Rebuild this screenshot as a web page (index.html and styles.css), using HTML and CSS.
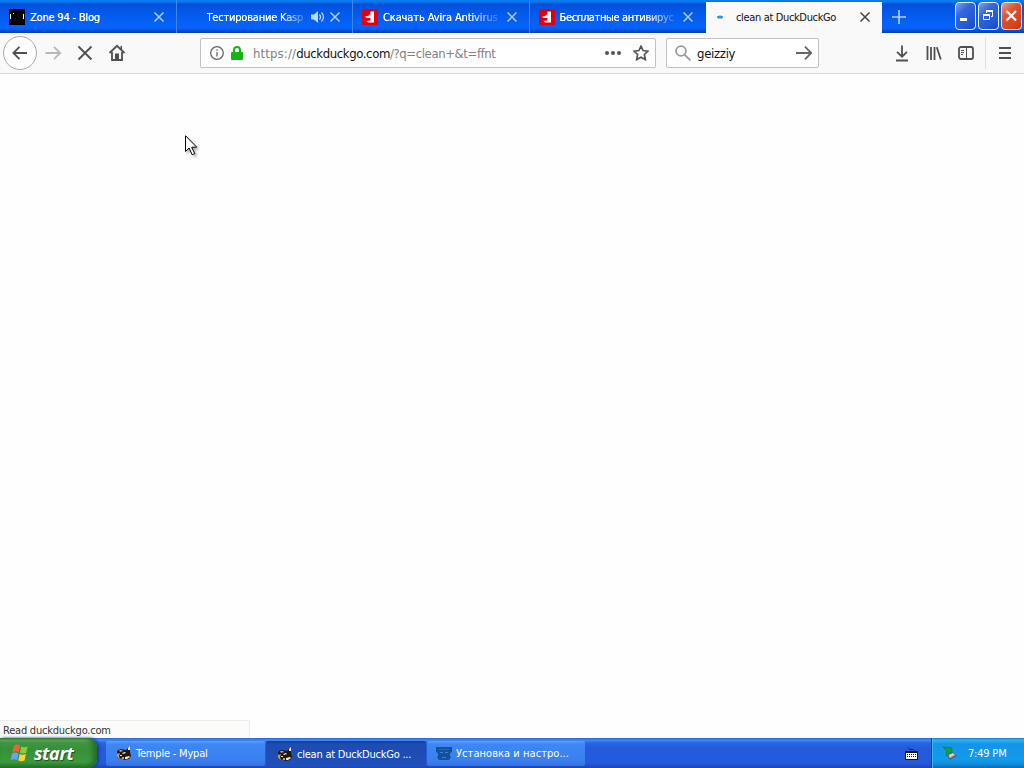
FILE: index.html
```html
<!DOCTYPE html>
<html lang="en">
<head>
  <meta charset="UTF-8">
  <meta name="viewport" content="width=device-width, initial-scale=1.0">
  <title>clean at DuckDuckGo</title>
  <link rel="stylesheet" href="styles.css">
</head>
<body>
  <div class="screen">

    <!-- Tabs -->
    <header class="titlebar">
      <div class="tab">
        <svg class="favicon" width="16" height="16" viewBox="0 0 16 16"><path fill="#000" d="M0 0h16v16H0z"/><path fill="#fff" d="M1 5h1v5H1zM4 4h1v1H4zM14 5h1v5h-1z"/></svg>
        <span class="tab-title zone">Zone 94 - Blog</span>
        <svg class="close" width="12" height="12" viewBox="0 0 12 12"><path d="M1.500 1.500l9 9m0-9l-9 9"/></svg>
      </div>
      <div class="tab">
        <span class="favicon blank"></span>
        <span class="tab-title fade test">Тестирование Kasp</span>
        <svg class="sound" width="14" height="14" viewBox="0 0 14 14"><path fill="#b9dcff" d="M0 4.500h3L7 1v12L3 9.500H0z"/><path fill="none" stroke="#b9dcff" stroke-width="1.300" d="M8.500 4.500q2 2.500 0 5M10.500 2.500q4 4.500 0 9"/></svg>
        <svg class="close" width="12" height="12" viewBox="0 0 12 12"><path d="M1.500 1.500l9 9m0-9l-9 9"/></svg>
      </div>
      <div class="tab">
        <svg class="favicon" width="16" height="16" viewBox="0 0 16 16"><rect width="16" height="16" rx="1" fill="#e20010"/><path fill="#fff" d="M8.500 2.500H12v11H6L4.500 12l4-.5V9H4.500L3 7.500l3-.5 2.500-2z"/></svg>
        <span class="tab-title fade avira">Скачать Avira Antivirus</span>
        <svg class="close" width="12" height="12" viewBox="0 0 12 12"><path d="M1.500 1.500l9 9m0-9l-9 9"/></svg>
      </div>
      <div class="tab">
        <svg class="favicon" width="16" height="16" viewBox="0 0 16 16"><rect width="16" height="16" rx="1" fill="#e20010"/><path fill="#fff" d="M8.500 2.500H12v11H6L4.500 12l4-.5V9H4.500L3 7.500l3-.5 2.500-2z"/></svg>
        <span class="tab-title fade free">Бесплатные антивирус</span>
        <svg class="close" width="12" height="12" viewBox="0 0 12 12"><path d="M1.500 1.500l9 9m0-9l-9 9"/></svg>
      </div>
      <div class="tab active">
        <svg class="favicon" width="16" height="16" viewBox="0 0 16 16"><ellipse cx="5" cy="8" rx="3" ry="1.500" fill="#2e8fe0"/></svg>
        <span class="tab-title duck">clean at DuckDuckGo</span>
        <svg class="close" width="12" height="12" viewBox="0 0 12 12"><path d="M1.500 1.500l9 9m0-9l-9 9"/></svg>
      </div>
      <svg class="new-tab" width="14" height="14" viewBox="0 0 14 14"><path d="M7 0v14M0 7h14"/></svg>
      <div class="window-buttons">
        <span class="win-btn"><svg width="20" height="26" viewBox="0 0 20 26"><path fill="#fff" d="M4 15h7v3H4z"/></svg></span>
        <span class="win-btn"><svg width="20" height="26" viewBox="0 0 20 26"><path fill="none" stroke="#fff" d="M7.500 10V7.500h6v6H12M4.500 11.500h6v5h-6z"/><path fill="#fff" d="M7 7h7v2H7zM4 11h7v2H4z"/></svg></span>
        <span class="win-btn red"><svg width="20" height="26" viewBox="0 0 20 26"><path fill="none" stroke="#fff" stroke-width="2.200" d="M4.500 8l9.500 9.500M14 8l-9.500 9.500"/></svg></span>
      </div>
    </header>

    <!-- Navigation bar -->
    <nav class="navbar">
      <div class="nav-buttons">
        <span class="back"><svg width="18" height="18" viewBox="0 0 18 18"><path d="M16 9H2.500M8.500 2.800L2.300 9l6.200 6.200"/></svg></span>
        <svg class="forward" width="18" height="18" viewBox="0 0 18 18"><path d="M1.500 9H16M10 2.800L16.200 9 10 15.200"/></svg>
        <svg width="18" height="18" viewBox="0 0 18 18"><path d="M2.500 2.500l13 13m0-13l-13 13"/></svg>
        <svg width="18" height="18" viewBox="0 0 18 18"><path d="M1.500 9L9 1.800 16.500 9M4 8v8h10V8"/><path class="solid" d="M7 9.500h4V16H7zM12.500 2H14v4h-1.500z"/></svg>
      </div>

      <div class="urlbar">
        <svg class="info" width="14" height="14" viewBox="0 0 14 14"><circle cx="7" cy="7" r="6.300"/><path d="M7 6v4.500M7 3.200v1.600"/></svg>
        <svg class="lock" width="12" height="14" viewBox="0 0 12 14"><path fill="none" stroke="#12b512" stroke-width="2" d="M3 7V4a3 3 0 0 1 6 0v3"/><rect y="6" width="12" height="8" rx="1" fill="#12b512"/></svg>
        <span class="url"><span class="scheme">https://</span><b>duckduckgo.com</b>/?q=clean+&amp;t=ffnt</span>
        <svg class="dots" width="16" height="6" viewBox="0 0 16 6"><circle cx="2" cy="3" r="2"/><circle cx="8" cy="3" r="2"/><circle cx="14" cy="3" r="2"/></svg>
        <svg class="star" width="16" height="16" viewBox="0 0 16 16"><path d="M8 1.200l2.100 4.300 4.800.7-3.500 3.300.9 5.100L8 12.200l-4.300 2.400.9-5.100L1.100 6.200l4.800-.7z"/></svg>
      </div>

      <div class="searchbar">
        <svg class="magnifier" width="16" height="16" viewBox="0 0 16 16"><circle cx="6" cy="6" r="4.900"/><path d="M9.600 9.600l5.900 5.900"/></svg>
        <span class="query">geizziy</span>
        <svg class="go" width="16" height="16" viewBox="0 0 16 16"><path d="M0 8h15M9 1.700L15.200 8 9 14.300"/></svg>
      </div>

      <div class="tools">
        <svg width="16" height="18" viewBox="0 0 16 18"><path d="M8 1.500v11M3 7.800l5 4.900 5-4.900M2 16.500h12"/></svg>
        <svg width="16" height="18" viewBox="0 0 16 18"><path d="M1.500 2v14M5 3v13M8.500 3v13M10.800 3.200l4 12.300"/></svg>
        <svg width="16" height="18" viewBox="0 0 16 18"><rect x="1" y="3" width="14" height="12" rx="2"/><path class="thin" d="M8.500 3v12M3 6.500h3M3 8.500h3M3 10.500h2"/></svg>
      </div>
      <svg class="menu" width="14" height="18" viewBox="0 0 14 18"><path d="M1 4h12M1 9h12M1 14h12"/></svg>
    </nav>

    <main class="page">
      <div class="status"><span>Read duckduckgo.com</span></div>
    </main>

    <!-- Taskbar -->
    <footer class="taskbar">
      <div class="start">
        <svg width="20" height="20" viewBox="0 0 20 20"><path fill="#ef6235" d="M4 2.500q3.500-2 6 0L8.800 9q-3-1.500-6.500.2z"/><path fill="#8ccc3c" d="M11.200 3.500q3 1.500 6.500-.2L16.200 9.700q-3 1.500-6.200 0z"/><path fill="#6ea0f5" d="M2 10.500q3.300-1.800 6.500 0L7.200 17q-3-1.700-6.500 0z"/><path fill="#fbd238" d="M9.700 11q3 1.500 6.300 0L14.500 17.500q-3 1.500-6.200 0z"/></svg>
        <span>start</span>
      </div>
      <div class="tasks">
        <div class="task">
          <svg width="16" height="16" viewBox="0 0 16 16"><path fill="#1d1713" d="M2 4l3-1 5 1 3-3 1 0 0 5 1 4-2 3-5 1-2-2-3 1-2-2 1-3-1-2z"/><path fill="#c99a58" d="M3 4l3 0 1 1-3 1zM1 8l3-1-1 3 1 3-2-1-1-2zM6 11l2 0 0 2-2 0z"/><path fill="#f6ead2" d="M12 2l2-2v4l-2 0zM6 7l3-1 1 1-3 1zM9 11l4-1 1 1-3 2H9zM4 9h2v1H4z"/></svg>
          <span class="task-a">Temple - Mypal</span>
        </div>
        <div class="task pressed">
          <svg width="16" height="16" viewBox="0 0 16 16"><path fill="#1d1713" d="M2 4l3-1 5 1 3-3 1 0 0 5 1 4-2 3-5 1-2-2-3 1-2-2 1-3-1-2z"/><path fill="#c99a58" d="M3 4l3 0 1 1-3 1zM1 8l3-1-1 3 1 3-2-1-1-2zM6 11l2 0 0 2-2 0z"/><path fill="#f6ead2" d="M12 2l2-2v4l-2 0zM6 7l3-1 1 1-3 1zM9 11l4-1 1 1-3 2H9zM4 9h2v1H4z"/></svg>
          <span class="task-b">clean at DuckDuckGo ...</span>
        </div>
        <div class="task">
          <svg width="16" height="16" viewBox="0 0 16 16"><path fill="#15509c" d="M0 1h16v5l-2 1v3l1 1-2 3H3l-2-3 1-1V7L0 6z"/><path fill="#2668b8" d="M3 3h10v1H3z"/><path fill="#2f83dc" d="M4 6h3v1H4zM9 6h3v1H9zM6 11h4v1H6z"/></svg>
          <span class="task-c">Установка и настро...</span>
        </div>
      </div>
      <svg class="keyboard" width="14" height="14" viewBox="0 0 14 14"><path fill="none" stroke="#0a1c50" d="M3 .5l2 2h3l2 2"/><rect y="4" width="13" height="9" fill="#111"/><path fill="#fff" d="M1 6h11v6H1z"/><path stroke="#111" stroke-dasharray="1 1" d="M2 7.500h10M2 9.500h10"/></svg>
      <div class="tray">
        <svg width="14" height="14" viewBox="0 0 14 14"><path fill="#566875" d="M3 9l7-3 4 4-7 4z"/><path fill="#c3cfd2" d="M5 9l5-2 2 2-5 3z"/><path fill="#16a52c" stroke="#0b6d33" stroke-width=".5" d="M0 1l9 1v5L7 6l-2 4-2-1 1-4z"/></svg>
        <span class="clock">7:49 PM</span>
      </div>
    </footer>

    <svg class="cursor" width="16" height="24" viewBox="0 0 16 24"><path fill="#fff" stroke="#000" d="M.5.7v15.800l3.600-3.500 3 6.700 2.600-1.200-3-6.300h5z"/></svg>
  </div>
</body>
</html>
```
FILE: styles.css
```css
body {
  margin: 0;
  overflow: hidden;
  font-family: 'DejaVu Sans Condensed', 'DejaVu Sans', sans-serif;
  font-stretch: condensed;
  font-size: 11px;
  color: #111;
}

svg {
  flex: none;
  display: block;
}

.screen {
  position: relative;
  width: 1024px;
  height: 768px;
  display: flex;
  flex-direction: column;
  background: #fefefe;
}

/* Tabs */
.titlebar {
  height: 33px;
  flex: none;
  display: flex;
  align-items: stretch;
  background: linear-gradient(#0a80ef 0, #0876f2 2px, #0350d8 4px, #0455e4 9px, #055ff5 20px, #0563fb 28px, #044ed0 31px, #0238ad 33px);
}

.tab {
  box-sizing: border-box;
  width: 176.5px;
  flex: none;
  display: flex;
  align-items: center;
  padding: 1px 11px 0 9px;
  border-right: 1px solid #3c86f5;
  color: #fff;
}

.tab:nth-child(4) {
  border-right-color: transparent;
}

.tab.active {
  width: 176px;
  margin-top: 2px;
  padding-top: 0;
  padding-bottom: 1px;
  border: 0;
  background: #f9f9fa;
  color: #111;
}

.favicon {
  width: 16px;
  height: 16px;
  flex: none;
  margin-right: 5px;
}

.tab-title {
  flex: 1;
  min-width: 0;
  padding-top: 1px;
  white-space: nowrap;
  line-height: 16px;
  text-shadow: 0 0 .5px currentColor;
}

.active .tab-title {
  text-shadow: none;
}

.fade {
  -webkit-mask-image: linear-gradient(to right, #000 85px, transparent 120px);
  mask-image: linear-gradient(to right, #000 85px, transparent 120px);
}

.zone { letter-spacing: -.2px; }
.test {
  letter-spacing: -.2px;
  -webkit-mask-image: linear-gradient(to right, #000 74px, transparent 102px);
  mask-image: linear-gradient(to right, #000 74px, transparent 102px);
}
.avira { letter-spacing: -.12px; }
.free { letter-spacing: -.35px; }
.duck { letter-spacing: -.35px; }

.sound {
  margin-right: 4px;
}

.close {
  fill: none;
  stroke: #a9d2ff;
  stroke-width: 1.5;
}

.active .close {
  stroke: #444;
}

.new-tab {
  align-self: center;
  margin-left: 10px;
  stroke: #a9d2ff;
  stroke-width: 1.7;
}

.window-buttons {
  display: flex;
  gap: 2px;
  margin: 2px 2px 0 auto;
}

.win-btn {
  box-sizing: border-box;
  width: 21px;
  height: 28px;
  border: 1px solid #e4efff;
  border-radius: 4px;
  background: linear-gradient(135deg, #7c9ff0 0, #3266dc 35%, #2459d7 70%, #164bc4 100%);
}

.win-btn.red {
  background: linear-gradient(135deg, #eb9a83 0, #dc512e 40%, #d8431c 75%, #b93410 100%);
}

/* Navigation bar */
.navbar {
  box-sizing: border-box;
  height: 41px;
  flex: none;
  display: flex;
  align-items: center;
  border-bottom: 1px solid #dcdcdc;
  background: #f9f9fa;
}

.navbar svg {
  fill: none;
  stroke: #505050;
  stroke-width: 1.8;
}

.navbar .solid {
  fill: #505050;
  stroke: none;
}

.navbar .thin {
  stroke-width: 1;
}

.nav-buttons {
  width: 197px;
  display: flex;
  align-items: center;
  gap: 14px;
  padding-left: 3px;
}

.back {
  box-sizing: border-box;
  width: 34px;
  height: 34px;
  display: flex;
  align-items: center;
  justify-content: center;
  margin-right: -7px;
  border: 1px solid #aaa;
  border-radius: 50%;
  background: #fdfdfd;
}

.navbar .forward {
  stroke: #b8b8b8;
}

.urlbar,
.searchbar {
  box-sizing: border-box;
  height: 30px;
  flex: none;
  display: flex;
  align-items: center;
  border: 1px solid #c0c0c0;
  border-radius: 2px;
  background: #fff;
  font-size: 13px;
}

.urlbar {
  width: 456px;
  padding: 0 6px 0 9px;
}

.navbar .info {
  stroke: #666;
  stroke-width: 1.3;
}

.lock {
  margin: 0 10px 0 7px;
}

.navbar .lock {
  stroke: none;
}

.url {
  flex: 1;
  color: #808080;
  letter-spacing: -.4px;
  white-space: nowrap;
}

.scheme {
  letter-spacing: .15px;
}

.url b {
  font-weight: normal;
  color: #111;
  letter-spacing: -.38px;
}

.navbar .dots {
  fill: #555;
  stroke: none;
  margin-right: 12px;
}

.navbar .star {
  stroke: #555;
  stroke-width: 1.7;
}

.searchbar {
  width: 153px;
  margin-left: 10px;
  padding: 0 6px 0 8px;
}

.navbar .magnifier {
  stroke: #999;
}

.query {
  flex: 1;
  margin-left: 6px;
  letter-spacing: -.3px;
}

.navbar .go {
  stroke: #666;
}

.tools {
  display: flex;
  gap: 16px;
  height: 32px;
  align-items: center;
  margin-left: auto;
  padding-right: 11px;
  border-right: 1px solid #e0e0e0;
}

.menu {
  margin: 0 12px;
}

/* Page */
.page {
  flex: 1;
  display: flex;
  align-items: flex-end;
}

.status {
  box-sizing: border-box;
  width: 250px;
  height: 18px;
  padding: 2px 0 0 3px;
  border: 1px solid #ececec;
  border-left: 0;
  border-bottom: 0;
  background: #fbfbfa;
  color: #333;
  line-height: 15px;
  letter-spacing: -.22px;
}

/* Taskbar */
.taskbar {
  height: 30px;
  flex: none;
  display: flex;
  background: linear-gradient(#2a60cf 0, #3f8cf3 2px, #2b64e2 5px, #245bdc 10px, #245bdc 25px, #1c46ae 30px);
  color: #fff;
}

.start {
  box-sizing: border-box;
  width: 97px;
  display: flex;
  align-items: center;
  gap: 4px;
  padding: 0 0 1px 10px;
  border-radius: 0 9px 9px 0;
  background: linear-gradient(#2d7c34 0, #66ad63 2px, #3f9440 5px, #379038 12px, #3b9a3c 24px, #27702b 30px);
  box-shadow: inset -4px 0 5px #236d2a, 2px 0 3px #173f9e;
  font: italic bold 18px 'Open Sans', sans-serif;
  letter-spacing: -.4px;
  text-shadow: 1px 1px 1px #1f4f20;
}

.tasks {
  display: flex;
  gap: 1px;
  padding: 3px 0 2px 9px;
}

.task {
  box-sizing: border-box;
  width: 159px;
  display: flex;
  align-items: center;
  gap: 4px;
  padding-left: 10px;
  border-radius: 2px;
  background: linear-gradient(#60a0fa 0, #3f87f5 3px, #3a7ff0 20px, #3471e0 25px);
  white-space: nowrap;
}

.task:last-child {
  width: 158px;
  padding-left: 9px;
}

.task.pressed {
  width: 160px;
  padding: 2px 0 0 11px;
  background: linear-gradient(#153d92 0, #1d4cb2 3px, #1f50b8 25px);
}

.task-a { letter-spacing: -.2px; }
.task-b { letter-spacing: -.22px; }
.task-c { letter-spacing: .05px; }

.keyboard {
  margin: 9px 12px 0 auto;
}

.tray {
  box-sizing: border-box;
  width: 93px;
  display: flex;
  align-items: center;
  gap: 11px;
  padding-left: 11px;
  border-left: 1px solid #103c9b;
  background: linear-gradient(#1578c8 0, #32b2f3 2px, #1594e8 6px, #129aeb 22px, #118ddb 26px, #0d68b4 30px);
  box-shadow: inset 1px 0 0 #38b8f5;
}

.clock {
  letter-spacing: -.2px;
}

/* Mouse pointer over the page */
.cursor {
  position: absolute;
  left: 185px;
  top: 135px;
  filter: drop-shadow(2px 2px 1px rgba(0, 0, 0, .3));
}
```
